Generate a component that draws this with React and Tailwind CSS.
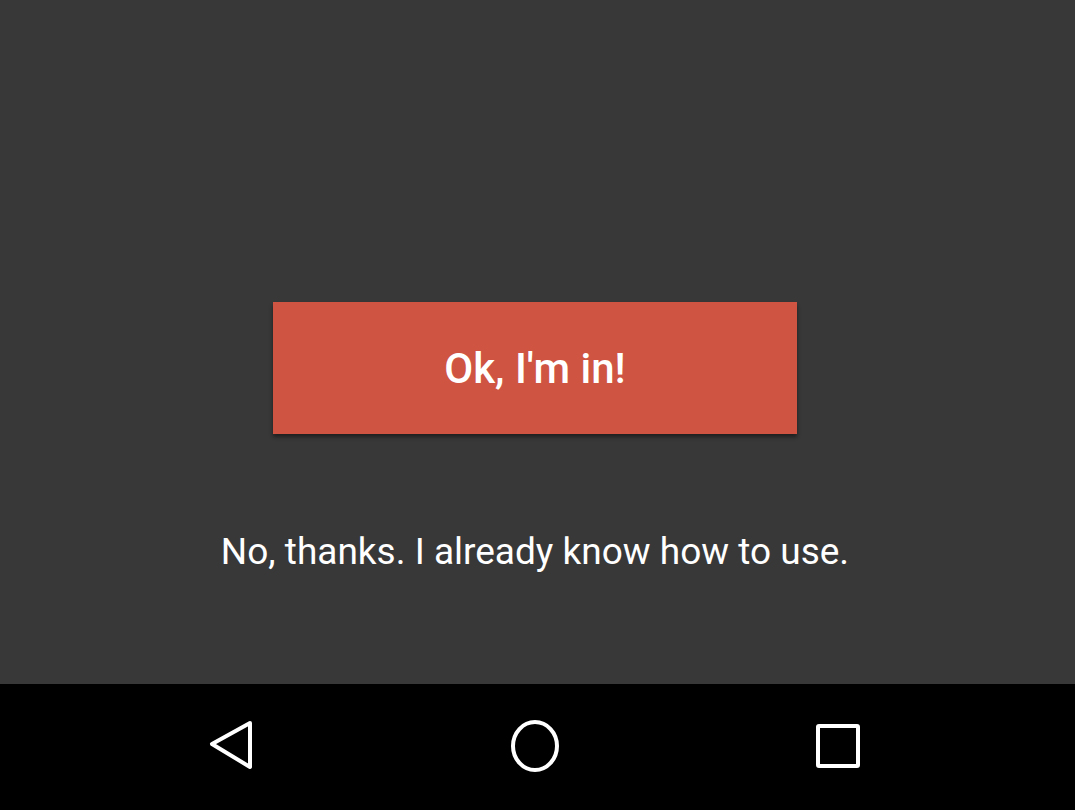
export default function App() {
  return (
    <div className="w-[1075px] h-[810px] flex flex-col bg-[#383838] font-['Roboto',sans-serif]">
      <div className="flex-1 flex flex-col items-center pr-[5px]">
        <button className="mt-[302px] w-[524px] h-[132px] bg-[#cf5441] text-white text-[42px] font-medium shadow-[0_3px_4px_rgba(0,0,0,0.45)]">
          Ok, I'm in!
        </button>
        <p className="mt-[96px] text-white text-[37px] leading-[44px]">
          No, thanks. I already know how to use.
        </p>
      </div>
      <div className="h-[126px] bg-black flex items-center justify-center pr-[5px] pb-[2px]">
        <div className="w-[303px] flex justify-center">
          <svg width="48" height="54" viewBox="0 0 48 54" fill="none" stroke="white" strokeWidth="4" strokeLinejoin="round">
            <path d="M42 4 L4 25 L42 48 Z" />
          </svg>
        </div>
        <div className="w-[303px] flex justify-center">
          <svg width="52" height="54" viewBox="0 0 52 54" fill="none" stroke="white" strokeWidth="4">
            <ellipse cx="26" cy="27" rx="22" ry="24" />
          </svg>
        </div>
        <div className="w-[303px] flex justify-center">
          <svg width="48" height="48" viewBox="0 0 48 48" fill="none" stroke="white" strokeWidth="4" strokeLinejoin="round">
            <rect x="4" y="4" width="40" height="40" rx="1" />
          </svg>
        </div>
      </div>
    </div>
  );
}
